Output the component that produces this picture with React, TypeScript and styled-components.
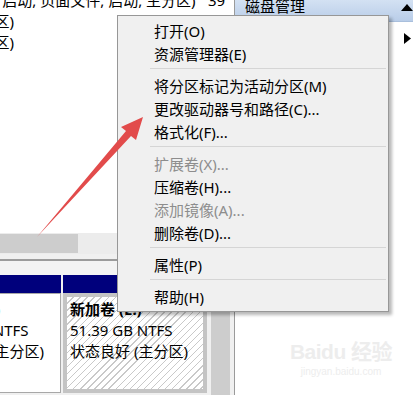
import React from 'react';
import styled, { createGlobalStyle } from 'styled-components';

const GlobalStyle = createGlobalStyle`
  html, body { margin: 0; padding: 0; width: 413px; height: 395px; overflow: hidden; background: #fff; }
  #root { width: 413px; height: 395px; }
`;

const FONT = `"Noto Sans", "Noto Sans CJK SC", sans-serif`;

const Screen = styled.div`
  position: relative;
  width: 413px;
  height: 395px;
  display: flex;
  overflow: hidden;
  font-family: ${FONT};
  font-size: 15px;
  color: #000;
  background: #fff;
`;

const LeftPane = styled.div`
  width: 234px;
  flex: none;
  display: flex;
  flex-direction: column;
  overflow: hidden;
`;

const ListArea = styled.div`
  height: 233px;
  flex: none;
  overflow: hidden;
  background: #fff;
`;

const ListBody = styled.div`
  margin-top: -10px;
  margin-left: -104px;
`;

const ListRow = styled.div`
  height: 21px;
  line-height: 21px;
  display: flex;
  white-space: nowrap;
`;

const StatusCell = styled.div`
  width: 312px;
  flex: none;
  overflow: hidden;
`;

const NumCell = styled.div`
  flex: none;
`;

const HScroll = styled.div`
  height: 21px;
  flex: none;
  box-sizing: border-box;
  padding: 1px 0;
  background: #ececec;
`;

const HThumb = styled.div`
  width: 78px;
  height: 100%;
  background: #cdcdcd;
`;

const Splitter = styled.div`
  height: 21px;
  flex: none;
  background: linear-gradient(
    to bottom,
    #f0f0f0 0 5px,
    #9c9c9c 5px 7px,
    #f4f4f4 7px 100%
  );
`;

const DiskArea = styled.div`
  flex: 1;
  display: flex;
  background: #f0f0f0;
`;

const DiskStrip = styled.div`
  flex: 1;
  display: flex;
  gap: 2px;
  margin-left: -79px;
  padding-bottom: 2px;
  overflow: hidden;
`;

const Partition = styled.div<{ $w: number }>`
  width: ${(p) => p.$w}px;
  flex: none;
  display: flex;
  flex-direction: column;
`;

const PartHeader = styled.div`
  height: 18px;
  flex: none;
  background: #00007c;
`;

const PartBody = styled.div<{ $selected?: boolean }>`
  flex: 1;
  box-sizing: border-box;
  line-height: 21px;
  white-space: nowrap;
  overflow: hidden;
  ${(p) =>
    p.$selected
      ? `border: 4px solid #c4c4c4;
         padding: 2px 3px;
         background: repeating-linear-gradient(135deg, #ffffff 0 4px, #c9c9c9 4px 5px);`
      : `border: 1px solid #a8a8a8;
         padding: 5px 2px 5px 4px;
         background: #ffffff;`}
`;

const PartTitle = styled.div`
  font-weight: 700;
`;

const VScroll = styled.div`
  width: 26px;
  flex: none;
  box-sizing: border-box;
  padding: 0 4px 0 3px;
  background: #f0f0f0;
`;

const VThumb = styled.div`
  height: 100%;
  background: #cdcdcd;
`;

const RightPane = styled.div`
  flex: 1;
  border-left: 1px solid #9a9a9a;
  display: flex;
  flex-direction: column;
  background: #fff;
`;

const ActionHeader = styled.div`
  height: 22px;
  flex: none;
  box-sizing: border-box;
  padding: 0 0 10px 10px;
  display: flex;
  align-items: center;
  justify-content: space-between;
  background: linear-gradient(to bottom, #d3e1f3, #b9cde8);
  border-bottom: 1px solid #a9bfdc;
`;

const ActionRow = styled.div`
  height: 24px;
  display: flex;
  align-items: center;
  justify-content: space-between;
  padding: 4px 2px 0 26px;
`;

const Menu = styled.div`
  position: absolute;
  left: 117px;
  top: 15px;
  width: 272px;
  box-sizing: border-box;
  border: 1px solid #979797;
  background: #f0f0f0;
  padding: 3px 2px;
  box-shadow: 3px 3px 3px rgba(0, 0, 0, 0.28);
  z-index: 2;
  font-family: ${FONT};
  font-size: 15px;
`;

const MenuItem = styled.div<{ $disabled?: boolean }>`
  height: 23px;
  display: flex;
  align-items: center;
  padding-left: 34px;
  white-space: nowrap;
  color: ${(p) => (p.$disabled ? '#8d8d8d' : '#000')};
`;

const MenuSep = styled.div`
  height: 1px;
  margin: 3px 0 5px 30px;
  background: #d5d5d5;
`;

const Watermark = styled.div`
  position: absolute;
  left: 296px;
  top: 338px;
  width: 90px;
  display: flex;
  flex-direction: column;
  align-items: center;
  color: #ededed;
  white-space: nowrap;
  font-family: "Liberation Sans", "Noto Sans CJK SC", sans-serif;
  pointer-events: none;
`;

const WmTitle = styled.div`
  font-size: 21px;
  font-weight: 700;
  line-height: 28px;
  letter-spacing: -0.5px;
`;

const WmUrl = styled.div`
  font-size: 10px;
  line-height: 12px;
`;

const ArrowLayer = styled.svg`
  position: absolute;
  left: 0;
  top: 0;
  z-index: 3;
  pointer-events: none;
`;

type Item = { label: string; disabled?: boolean };
const groups: Item[][] = [
  [{ label: '打开(O)' }, { label: '资源管理器(E)' }],
  [
    { label: '将分区标记为活动分区(M)' },
    { label: '更改驱动器号和路径(C)...' },
    { label: '格式化(F)...' },
  ],
  [
    { label: '扩展卷(X)...', disabled: true },
    { label: '压缩卷(H)...' },
    { label: '添加镜像(A)...', disabled: true },
    { label: '删除卷(D)...' },
  ],
  [{ label: '属性(P)' }],
  [{ label: '帮助(H)' }],
];

const rows = [
  { status: '状态良好 (系统, 启动, 页面文件, 启动, 主分区)', size: '39' },
  { status: '状态良好 (主分区)', size: '' },
  { status: '状态良好 (主分区)', size: '' },
];

export default function App() {
  return (
    <>
      <GlobalStyle />
      <Screen>
        <LeftPane>
          <ListArea>
            <ListBody>
              {rows.map((r, i) => (
                <ListRow key={i}>
                  <StatusCell>{r.status}</StatusCell>
                  <NumCell>{r.size}</NumCell>
                </ListRow>
              ))}
            </ListBody>
          </ListArea>
          <HScroll>
            <HThumb />
          </HScroll>
          <Splitter />
          <DiskArea>
            <DiskStrip>
              <Partition $w={140}>
                <PartHeader />
                <PartBody>
                  <PartTitle>新加卷 (D:)</PartTitle>
                  <div>48.83 GB NTFS</div>
                  <div>状态良好 (主分区)</div>
                </PartBody>
              </Partition>
              <Partition $w={144}>
                <PartHeader />
                <PartBody $selected>
                  <PartTitle>新加卷 (E:)</PartTitle>
                  <div>51.39 GB NTFS</div>
                  <div>状态良好 (主分区)</div>
                </PartBody>
              </Partition>
            </DiskStrip>
            <VScroll>
              <VThumb />
            </VScroll>
          </DiskArea>
        </LeftPane>
        <RightPane>
          <ActionHeader>
            <span>磁盘管理</span>
            <svg width="12" height="7" viewBox="0 0 12 7" style={{ marginTop: 4 }}>
              <polygon points="6,0 12,7 0,7" fill="#000" />
            </svg>
          </ActionHeader>
          <ActionRow>
            <span>更多操作</span>
            <svg width="7" height="11" viewBox="0 0 7 11">
              <polygon points="0,0 7,5.5 0,11" fill="#000" />
            </svg>
          </ActionRow>
        </RightPane>

        <Menu>
          {groups.map((g, gi) => (
            <React.Fragment key={gi}>
              {gi > 0 && <MenuSep />}
              {g.map((it) => (
                <MenuItem key={it.label} $disabled={it.disabled}>
                  {it.label}
                </MenuItem>
              ))}
            </React.Fragment>
          ))}
        </Menu>

        <Watermark>
          <WmTitle>Baidu 经验</WmTitle>
          <WmUrl>jingyan.baidu.com</WmUrl>
        </Watermark>

        <ArrowLayer width="413" height="395" viewBox="0 0 413 395">
          <polygon
            points="37,237 131,136 136,140 143,117 121,127 126,131"
            fill="#e24b4b"
          />
        </ArrowLayer>
      </Screen>
    </>
  );
}
